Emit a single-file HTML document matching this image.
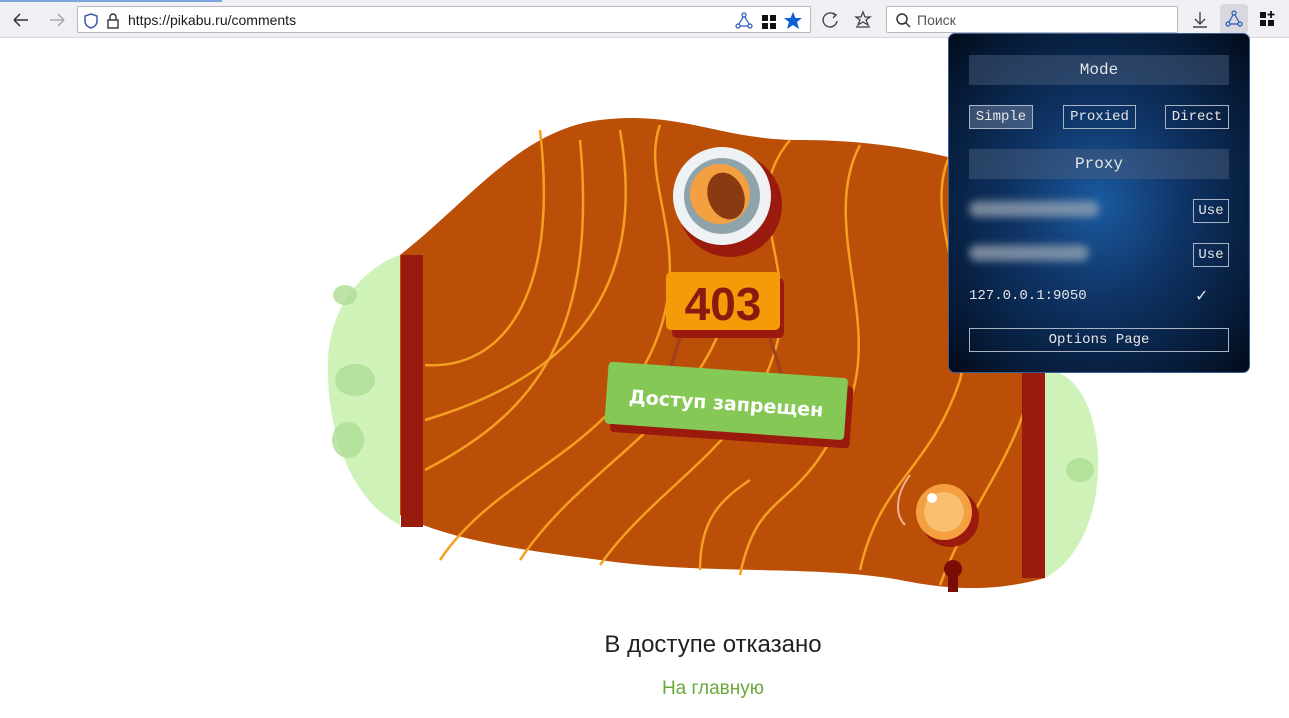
<!DOCTYPE html>
<html><head><meta charset="utf-8"><style>
*{margin:0;padding:0;box-sizing:border-box}
body{width:1289px;height:718px;background:#fff;position:relative;overflow:hidden;font-family:"Liberation Sans",sans-serif}
.tb{position:absolute;left:0;top:0;width:1289px;height:38px;background:#f0f0f4;border-bottom:1px solid #d6d6dc}
.tab{position:absolute;left:0;top:0;width:222px;height:2px;background:#7aa6d9}
.url{position:absolute;left:77px;top:6px;width:734px;height:27px;background:#fff;border:1px solid #b8b8c0;border-radius:2px}
.url span{position:absolute;left:50px;top:5px;font-size:14px;color:#1a1a1a}
.srch{position:absolute;left:886px;top:6px;width:292px;height:27px;background:#fff;border:1px solid #b8b8c0;border-radius:2px}
.srch span{position:absolute;left:30px;top:5px;font-size:14px;color:#555}
.pop{position:absolute;left:948px;top:33px;width:302px;height:340px;border-radius:7px;border:1px solid #3a5f95;background:radial-gradient(ellipse at 50% 50%,#1a5aa0 0%,#0f3466 40%,#061a36 80%,#020a18 100%);font-family:"Liberation Mono",monospace;color:#e6e6e6}
.hd{position:absolute;left:20px;width:260px;height:30px;background:rgba(80,100,130,.45);text-align:center;line-height:30px;font-size:16px}
.bt{position:absolute;height:24px;border:1px solid #a8b4c4;font-size:14px;text-align:center;line-height:22px}
.blur{position:absolute;left:20px;height:16px;border-radius:8px;background:#9aa6b4;filter:blur(4px);opacity:.75}
</style></head><body>
<div class="tb"><div class="tab"></div>
<svg style="position:absolute;left:10px;top:10px" width="70" height="20"><path d="M4 10H18M4 10L10 4M4 10L10 16" stroke="#333" stroke-width="1.5" fill="none"/><path d="M40 10H54M54 10L48 4M54 10L48 16" stroke="#aaa" stroke-width="1.5" fill="none"/></svg>
<div class="url"><svg style="position:absolute;left:6px;top:5px" width="40" height="18"><path d="M7 2L13 4V9C13 13 10 15 7 16C4 15 1 13 1 9V4Z" fill="none" stroke="#3c5aa8" stroke-width="1.5"/><rect x="24" y="8" width="10" height="8" fill="none" stroke="#333" stroke-width="1.4"/><path d="M26 8V5A3 3 0 0 1 32 5V8" fill="none" stroke="#333" stroke-width="1.4"/></svg><span>https://pikabu.ru/comments</span>
<svg style="position:absolute;left:656px;top:4px" width="74" height="20"><g fill="none" stroke="#2a5ab8" stroke-width="1.2"><circle cx="10" cy="4" r="2"/><circle cx="4" cy="15" r="2"/><circle cx="16" cy="15" r="2"/><path d="M9 6L5 13M11 6L15 13M6 15H14"/></g><rect x="28" y="4" width="6" height="6" fill="#111"/><rect x="36" y="4" width="6" height="6" fill="#111"/><rect x="28" y="12" width="6" height="6" fill="#111"/><rect x="36" y="12" width="6" height="6" fill="#111"/><path d="M59 1L61.5 7H68L63 11L65 18L59 14L53 18L55 11L50 7H56.5Z" fill="#0a5fd8"/></svg></div>
<svg style="position:absolute;left:820px;top:10px" width="56" height="20"><path d="M15 5A7 7 0 1 0 17 11" fill="none" stroke="#444" stroke-width="1.4"/><path d="M13 3L16 5L13 8" fill="none" stroke="#444" stroke-width="1.4"/><path d="M43 2L45 7H50L46 10L48 15L43 12L38 15L40 10L36 7H41Z" fill="none" stroke="#444" stroke-width="1.3"/><path d="M36 17H50" stroke="#444" stroke-width="1.3"/></svg>
<div class="srch"><svg style="position:absolute;left:8px;top:5px" width="16" height="16"><circle cx="7" cy="7" r="5" fill="none" stroke="#333" stroke-width="1.5"/><path d="M11 11L15 15" stroke="#333" stroke-width="1.5"/></svg><span>Поиск</span></div>
<svg style="position:absolute;left:1190px;top:10px" width="20" height="20"><path d="M10 2V13M5 9L10 14L15 9M3 17H17" fill="none" stroke="#444" stroke-width="1.4"/></svg>
<div style="position:absolute;left:1220px;top:4px;width:28px;height:30px;background:#d8d8de;border-radius:4px"></div>
<svg style="position:absolute;left:1224px;top:9px" width="20" height="20"><g fill="none" stroke="#2a5ab8" stroke-width="1.2"><circle cx="10" cy="4" r="2"/><circle cx="4" cy="15" r="2"/><circle cx="16" cy="15" r="2"/><path d="M9 6L5 13M11 6L15 13M6 15H14"/></g></svg>
<svg style="position:absolute;left:1260px;top:11px" width="16" height="16"><rect x="0" y="1" width="6" height="6" fill="#111"/><rect x="0" y="9" width="6" height="6" fill="#111"/><rect x="8" y="9" width="6" height="6" fill="#111"/><path d="M11 0V7M7.5 3.5H14.5" stroke="#111" stroke-width="1.8"/></svg>
</div>

<svg style="position:absolute;left:0;top:0" width="1289" height="718">
<path d="M400 255 C370 265 330 300 328 360 C326 430 350 500 400 525 Z" fill="#cff2b8"/>
<path d="M1045 370 C1080 370 1100 420 1098 470 C1096 530 1070 565 1045 578 Z" fill="#cff2b8"/>
<g fill="#aedd94" opacity=".8"><ellipse cx="355" cy="380" rx="20" ry="16"/><ellipse cx="348" cy="440" rx="16" ry="18"/><ellipse cx="345" cy="295" rx="12" ry="10"/><ellipse cx="1080" cy="470" rx="14" ry="12"/></g>
<path d="M400 255 C470 200 520 130 600 120 C680 110 720 140 800 140 C870 140 920 150 960 160 L1045 170 L1045 578 C1000 590 960 592 900 580 C820 565 700 575 600 560 C520 550 450 540 400 515 Z" fill="#bb4f08"/>
<g fill="none" stroke="#f5a020" stroke-width="2.5">
<path d="M425 365 C500 370 560 300 540 130"/>
<path d="M425 470 C520 420 600 350 580 140"/>
<path d="M425 420 C560 380 650 300 620 130"/>
<path d="M440 560 C500 470 620 450 660 330 C690 240 640 180 660 125"/>
<path d="M520 560 C580 470 680 430 720 330"/>
<path d="M600 565 C660 480 760 440 780 330 C790 250 740 200 790 140"/>
<path d="M740 575 C760 480 800 520 850 400 C880 320 820 220 860 145"/>
<path d="M860 570 C880 480 930 470 960 380 C980 300 920 220 950 155"/>
<path d="M940 585 C980 480 1030 450 1040 330"/>
<path d="M700 570 C700 520 720 500 750 480"/>
</g>
<rect x="401" y="255" width="22" height="272" fill="#9a1a0e"/>
<rect x="1022" y="370" width="23" height="208" fill="#9a1a0e"/>
<circle cx="730" cy="205" r="52" fill="#9a1a0e"/>
<circle cx="722" cy="196" r="49" fill="#eef2f4"/>
<circle cx="722" cy="196" r="38" fill="#8fa4aa"/>
<circle cx="720" cy="194" r="30" fill="#f4a040"/>
<ellipse cx="726" cy="196" rx="18" ry="24" fill="#8a3a10" transform="rotate(-20 726 196)"/>
<rect x="672" y="278" width="112" height="60" rx="5" fill="#9a1a0e"/>
<rect x="666" y="272" width="114" height="58" rx="5" fill="#f59a08"/>
<text x="723" y="320" text-anchor="middle" font-family="Liberation Sans" font-weight="bold" font-size="46" fill="#8a1a0e">403</text>
<path d="M680 338 L665 385 M770 338 L785 385" stroke="#a04020" stroke-width="3"/>
<g transform="rotate(4 728 405)"><rect x="612" y="378" width="240" height="62" rx="4" fill="#9a1a0e"/><rect x="606" y="370" width="240" height="62" rx="4" fill="#86c856"/>
<text x="726" y="410" text-anchor="middle" font-family="DejaVu Sans" font-weight="bold" font-size="19" fill="#fff">Доступ запрещен</text></g>
<path d="M910 475 C895 495 895 515 905 525" stroke="#f0b090" stroke-width="2" fill="none"/>
<circle cx="950" cy="518" r="29" fill="#9a1a0e"/>
<circle cx="944" cy="512" r="28" fill="#f4a040"/>
<circle cx="944" cy="512" r="20" fill="#f8c070"/>
<circle cx="932" cy="498" r="5" fill="#fff"/>
<circle cx="953" cy="569" r="9" fill="#7a0e06"/><rect x="948" y="570" width="10" height="22" fill="#7a0e06"/>
</svg>

<div style="position:absolute;left:0;width:1426px;top:631px;text-align:center;font-size:24px;color:#222">В доступе отказано</div>
<div style="position:absolute;left:0;width:1426px;top:678px;text-align:center;font-size:19px;color:#6aa83a">На главную</div>

<div class="pop">
<div class="hd" style="top:21px">Mode</div>
<div class="bt" style="left:20px;top:71px;width:64px;background:rgba(120,140,170,.45)">Simple</div>
<div class="bt" style="left:114px;top:71px;width:73px">Proxied</div>
<div class="bt" style="left:216px;top:71px;width:64px">Direct</div>
<div class="hd" style="top:115px">Proxy</div>
<div class="blur" style="top:167px;width:130px"></div>
<div class="bt" style="left:244px;top:165px;width:36px">Use</div>
<div class="blur" style="top:211px;width:120px"></div>
<div class="bt" style="left:244px;top:209px;width:36px">Use</div>
<div style="position:absolute;left:20px;top:254px;font-size:14px">127.0.0.1:9050</div>
<div style="position:absolute;left:246px;top:252px;font-size:16px;font-family:'DejaVu Sans'">✓</div>
<div class="bt" style="left:20px;top:294px;width:260px">Options Page</div>
</div>
</body></html>
